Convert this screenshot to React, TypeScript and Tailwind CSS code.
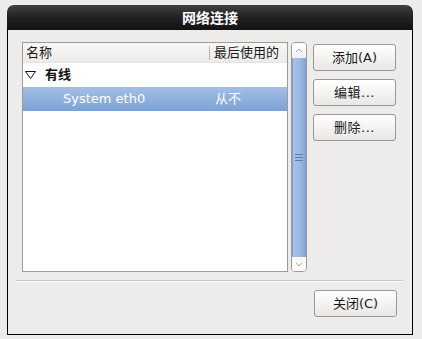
import React from "react";

const font = { fontFamily: '"DejaVu Sans", "Noto Sans CJK SC", sans-serif' };

function Btn({ label, className = "" }: { label: string; className?: string }) {
  return (
    <button
      className={`h-[27px] w-[83px] rounded-[3px] border border-[#9a9894] bg-gradient-to-b from-[#ffffff] to-[#e8e7e5] text-[13px] text-[#1a1a1a] shadow-[inset_0_1px_0_#ffffff] ${className}`}
    >
      {label}
    </button>
  );
}

function Scrollbar() {
  return (
    <div className="ml-[3px] flex w-[16px] flex-col overflow-hidden rounded-[4px] border border-[#9c9a97] bg-white">
      <div className="flex h-[15px] items-center justify-center bg-gradient-to-b from-white to-[#f1f1f1]">
        <svg width="8" height="5" viewBox="0 0 8 5">
          <path d="M1 4 L4 1 L7 4" fill="none" stroke="#a8a8a8" strokeWidth="1" />
        </svg>
      </div>
      <div className="flex flex-1 items-center justify-center border-x border-[#7f9fcb] bg-gradient-to-r from-[#a6c2e8] via-[#9dbbe4] to-[#86aad9]">
        <svg width="8" height="7" viewBox="0 0 8 7">
          <path d="M0 0.5 H8 M0 3.5 H8 M0 6.5 H8" stroke="#5b7fb0" strokeWidth="1" />
        </svg>
      </div>
      <div className="flex h-[14px] items-center justify-center bg-gradient-to-b from-[#f6f6f6] to-white">
        <svg width="8" height="5" viewBox="0 0 8 5">
          <path d="M1 1 L4 4 L7 1" fill="none" stroke="#a8a8a8" strokeWidth="1" />
        </svg>
      </div>
    </div>
  );
}

export default function App() {
  return (
    <div className="h-[339px] w-[422px] overflow-hidden bg-[#edecea] pl-[7px] pt-[5px]" style={font}>
      <div className="flex h-[330px] w-[406px] flex-col">
        <div className="flex h-[25px] items-center justify-center rounded-t-[7px] bg-gradient-to-b from-[#404040] via-[#222222] to-[#121212] pt-[1px] text-[14px] font-bold text-white">
          网络连接
        </div>
        <div className="flex flex-1 flex-col border-x border-b border-black bg-[#edeceb] pt-[12px]">
          <div className="flex h-[230px] pl-[14px]">
            <div className="flex w-[266px] flex-col overflow-hidden border border-[#9e9b97] bg-white">
              <div className="flex h-[20px] items-center border-b border-[#e4e3e1] bg-gradient-to-b from-[#f7f7f6] to-[#ecebe9] text-[13px] text-[#1a1a1a]">
                <div className="w-[186px] pl-[3px]">名称</div>
                <div className="h-[14px] w-px bg-[#b8b6b2]" />
                <div className="whitespace-nowrap pl-[4px]">最后使用的</div>
              </div>
              <div className="flex h-[24px] items-center text-[13px] font-bold text-[#111]">
                <svg className="ml-[2px]" width="11" height="8" viewBox="0 0 11 8">
                  <path d="M0.5 0.5 H10.5 L5.5 7.5 Z" fill="none" stroke="#111" strokeWidth="1" />
                </svg>
                <span className="ml-[9px]">有线</span>
              </div>
              <div className="flex h-[24px] items-center bg-gradient-to-b from-[#a2bfe5] to-[#7ca2d5] text-[13px] text-white">
                <div className="w-[187px] pl-[40px]">System eth0</div>
                <div className="pl-[5px]">从不</div>
              </div>
            </div>
            <Scrollbar />
            <div className="ml-[6px] flex flex-col gap-[8px] pt-[2px]">
              <Btn label="添加(A)" />
              <Btn label="编辑..." className="tracking-[0.5px]" />
              <Btn label="删除..." className="tracking-[0.5px]" />
            </div>
          </div>
          <div className="ml-[8px] mr-[9px] mt-[8px] h-[2px] border-t border-b border-t-[#c8c6c2] border-b-white" />
          <div className="flex justify-end pr-[15px] pt-[8px]">
            <Btn label="关闭(C)" />
          </div>
        </div>
      </div>
    </div>
  );
}
